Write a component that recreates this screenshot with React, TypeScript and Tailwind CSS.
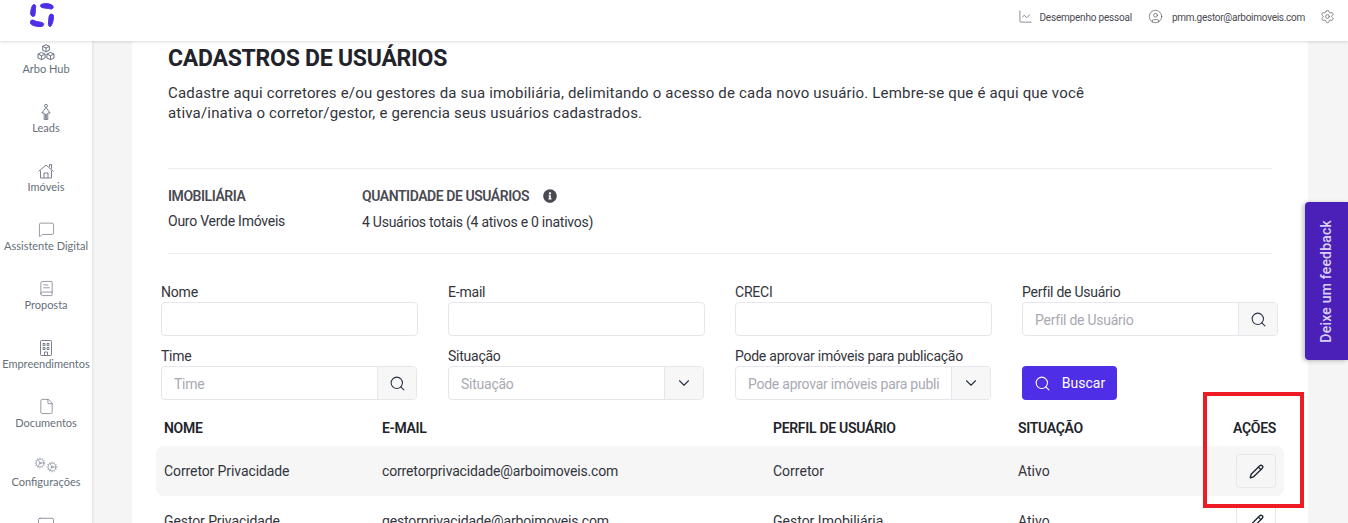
import { ChartLine, ChevronDown, CircleUser, File, MessageSquare, Search, Settings, BookText, Monitor, Pencil, Cog } from "lucide-react";
import { FaInfoCircle } from "react-icons/fa";
import type { ReactNode } from "react";

const iconProps = {
  viewBox: "0 0 18 18",
  fill: "none",
  stroke: "currentColor",
  strokeWidth: 0.9,
  className: "h-[18px] w-[18px]",
};

function CubesIcon() {
  return (
    <svg {...iconProps} className="h-[20px] w-[20px]">
      <path d="M9 1.5 12 3v3.5L9 8 6 6.500V3Z" />
      <path d="M6 3l3 1.500L12 3M9 4.500V8" />
      <path d="M5 8.500 8.200 10v3.500L5 15 1.800 13.500V10Z" />
      <path d="M1.800 10 5 11.500 8.200 10M5 11.500V15" />
      <path d="M13 8.500 16.200 10v3.500L13 15 9.800 13.500V10Z" />
      <path d="M9.800 10 13 11.500 16.200 10M13 11.500V15" />
    </svg>
  );
}

function PersonIcon() {
  return (
    <svg {...iconProps}>
      <circle cx="9" cy="2.800" r="1.500" />
      <path d="M9 4.500 4.800 10h2.400v6.500h1.500V11h.6v5.500h1.500V10h2.400Z" />
    </svg>
  );
}

function HouseIcon() {
  return (
    <svg {...iconProps}>
      <path d="M1.500 9.500 9 3l7.500 6.500" />
      <path d="M3.500 8.500V16h11V8.500" />
      <path d="M7 16v-5h4v5" />
      <path d="M12.500 5V2.500h2v4.200" />
    </svg>
  );
}

function TowerIcon() {
  return (
    <svg {...iconProps}>
      <rect x="3.500" y="1.500" width="11" height="15" rx="0.800" />
      <path d="M6 4.500h2v2H6zM10 4.500h2v2h-2zM6 8.500h2v2H6zM10 8.500h2v2h-2z" />
      <path d="M7.500 16.500V13h3v3.500" />
    </svg>
  );
}

const navItems: { label: string; icon: ReactNode }[] = [
  { label: "Arbo Hub", icon: <CubesIcon /> },
  { label: "Leads", icon: <PersonIcon /> },
  { label: "Imóveis", icon: <HouseIcon /> },
  { label: "Assistente Digital", icon: <MessageSquare className="h-[17px] w-[17px]" strokeWidth={1} /> },
  { label: "Proposta", icon: <BookText className="h-[17px] w-[17px]" strokeWidth={1} /> },
  { label: "Empreendimentos", icon: <TowerIcon /> },
  { label: "Documentos", icon: <File className="h-[17px] w-[17px]" strokeWidth={1} /> },
  {
    label: "Configurações",
    icon: (
      <span className="flex">
        <Cog className="-mt-[1px] h-3 w-3" strokeWidth={1} />
        <Cog className="mt-[3px] h-3 w-3" strokeWidth={1} />
      </span>
    ),
  },
  { label: "", icon: <Monitor className="h-[18px] w-[18px]" strokeWidth={1} /> },
];

const rows = [
  { name: "Corretor Privacidade", email: "corretorprivacidade@arboimoveis.com", profile: "Corretor", status: "Ativo" },
  { name: "Gestor Privacidade", email: "gestorprivacidade@arboimoveis.com", profile: "Gestor Imobiliária", status: "Ativo" },
];

function Logo() {
  return (
    <svg viewBox="0 0 24 24" className="h-6 w-6" fill="#4f2ee8" stroke="#4f2ee8" strokeWidth={1}>
      <path d="M3.500 1.500C5.500 1 6 3 5.500 5.500 5.200 8 5.500 11 4.500 13 3 14 .8 13 .7 11 .5 8 1.500 3 3.500 1.500Z" />
      <path d="M11 1.500C14 .2 20 .2 22.500 2.500 24 4 23 6.200 21 6 18 5.200 14 5.200 12 4.500 10.500 4 10 2.200 11 1.500Z" />
      <path d="M20 11.500C22 10.500 23.800 11.500 23.500 13.500 23.500 17 22.500 21.500 20.500 23.500 18.800 24 18.200 22 18.500 20 18.800 17 18.500 13.500 20 11.500Z" />
      <path d="M1 17.500C3 16.300 4.500 18 6.500 18.500 9 19 12.500 19 13.500 20.500 14.200 22 13 23.500 11 23.500 7 23.700 2.500 23 .5 20.500 0 19.300 .2 18.200 1 17.500Z" />
    </svg>
  );
}

function Field({ label }: { label: string }) {
  return (
    <div>
      <label className="mb-[1px] block h-[18px] text-[14px] leading-[18px] tracking-[-0.2px] text-[#33343c]">{label}</label>
      <input className="h-[34px] w-full rounded border border-[#e6e6ec] bg-white" />
    </div>
  );
}

function AddonField({ label, placeholder, chevron }: { label: string; placeholder: string; chevron?: boolean }) {
  return (
    <div>
      <label className="mb-[1px] block h-[18px] text-[14px] leading-[18px] tracking-[-0.25px] text-[#33343c]">{label}</label>
      <div className="flex h-[34px] w-[256px] overflow-hidden rounded border border-[#e6e6ec] bg-white">
        <div className="flex-1 truncate pl-3 text-[14px] leading-[34px] tracking-[-0.25px] text-[#a9a9b2]">{placeholder}</div>
        <div className="flex w-[39px] shrink-0 items-center justify-center border-l border-[#e6e6ec] bg-[#f7f7f8] text-[#2a3342]">
          {chevron ? <ChevronDown className="h-[18px] w-[18px]" strokeWidth={1.5} /> : <Search className="h-[17px] w-[17px]" strokeWidth={1.5} />}
        </div>
      </div>
    </div>
  );
}

export default function App() {
  return (
    <div className="relative h-[523px] w-[1348px] overflow-hidden bg-white font-['Roboto',sans-serif] text-[#33343c]">
      <header className="relative z-10 flex h-[41px] items-start justify-between bg-white pl-[30px] pr-[13px] pt-[3px] shadow-[0_1px_3px_rgba(0,0,0,0.14)]">
        <Logo />
        <div className="flex items-center pt-[4px] text-[10px] text-[#4a4a52]">
          <ChartLine className="mr-[6px] h-[15px] w-[15px]" strokeWidth={1} />
          <span className="mr-[16px] pt-[3px] tracking-[-0.2px]">Desempenho pessoal</span>
          <CircleUser className="mr-[9px] h-[15px] w-[15px]" strokeWidth={1} />
          <span className="mr-[15px] pt-[2px] tracking-[-0.27px]">pmm.gestor@arboimoveis.com</span>
          <Settings className="h-[15px] w-[15px]" strokeWidth={1} />
        </div>
      </header>

      <div className="flex h-[482px]">
        <nav className="z-[5] w-[92px] shrink-0 bg-white pt-[2px] font-['Lato',sans-serif] text-[11px] text-[#66707a]">
          {navItems.map((item, i) => (
            <div key={i} className="flex h-[59px] flex-col items-center whitespace-nowrap">
              <div className="flex h-[19px] items-center justify-center text-[#6b7280]">{item.icon}</div>
              <span className="leading-[14px]">{item.label}</span>
            </div>
          ))}
        </nav>

        <main className="flex-1 bg-[#f5f5f5] pl-[40px] pr-[40px] shadow-[inset_3px_0_3px_-2px_rgba(0,0,0,0.08)]">
          <div className="h-full overflow-hidden bg-white pl-[24px] pr-[24px]">
            <div className="ml-[12px]">
              <h1 className="mt-[4px] text-[23px] font-bold leading-[28px] tracking-[-0.25px] text-[#22232a]">CADASTROS DE USUÁRIOS</h1>
              <p className="mt-[10px] w-[940px] text-[15px] leading-[20px] tracking-[0.18px] text-[#33343c]">
                Cadastre aqui corretores e/ou gestores da sua imobiliária, delimitando o acesso de cada novo usuário. Lembre-se que é aqui que você ativa/inativa o corretor/gestor, e gerencia seus usuários cadastrados.
              </p>

              <div className="mt-[45px] flex h-[86px] w-[1104px] border-y border-[#ececf0] pt-[18px] text-[14px] leading-[18px]">
                <div className="w-[194px]">
                  <div className="font-semibold tracking-[-0.45px] text-[#4a4a52]">IMOBILIÁRIA</div>
                  <div className="mt-[7px] tracking-[-0.25px]">Ouro Verde Imóveis</div>
                </div>
                <div>
                  <div className="flex items-center font-semibold tracking-[-0.45px] text-[#4a4a52]">
                    QUANTIDADE DE USUÁRIOS
                    <FaInfoCircle className="ml-[14px] h-[14px] w-[14px]" />
                  </div>
                  <div className="mt-[8px] tracking-[-0.25px]">4 Usuários totais (4 ativos e 0 inativos)</div>
                </div>
              </div>
            </div>

            <div className="mt-[29px] ml-[5px] grid w-[1118px] grid-cols-[257px_257px_257px_256px] gap-x-[30px] gap-y-[11px]">
              <Field label="Nome" />
              <Field label="E-mail" />
              <Field label="CRECI" />
              <AddonField label="Perfil de Usuário" placeholder="Perfil de Usuário" />
              <AddonField label="Time" placeholder="Time" />
              <AddonField label="Situação" placeholder="Situação" chevron />
              <AddonField label="Pode aprovar imóveis para publicação" placeholder="Pode aprovar imóveis para publi" chevron />
              <div className="pt-[19px]">
                <button className="flex h-[34px] w-[95px] items-center justify-center gap-[11px] rounded bg-[#4f2ee8] text-[14px] text-white">
                  <Search className="h-[17px] w-[17px]" strokeWidth={1.5} />
                  Buscar
                </button>
              </div>
            </div>

            <table className="mt-[10px] w-[1128px] table-fixed text-left text-[14px]">
              <thead>
                <tr className="h-[36px] text-[#22232a]">
                  <th className="w-[226px] pl-[8px] font-semibold tracking-[-0.3px]">NOME</th>
                  <th className="w-[391px] font-semibold tracking-[-0.3px]">E-MAIL</th>
                  <th className="w-[245px] font-semibold tracking-[-0.3px]">PERFIL DE USUÁRIO</th>
                  <th className="w-[186px] font-semibold tracking-[-0.3px]">SITUAÇÃO</th>
                  <th className="pl-[29px] font-semibold tracking-[-0.3px]">AÇÕES</th>
                </tr>
              </thead>
              <tbody>
                {rows.map((row, i) => (
                  <tr key={row.name} className={i === 0 ? "h-[50px] bg-[#f6f6f6]" : "h-[50px]"}>
                    <td className="rounded-l-lg pl-[8px] tracking-[-0.1px]">{row.name}</td>
                    <td className="tracking-[-0.15px]">{row.email}</td>
                    <td>{row.profile}</td>
                    <td>{row.status}</td>
                    <td className="rounded-r-lg">
                      <button className="ml-[32px] flex h-[34px] w-[40px] items-center justify-center rounded border border-[#e8e8ea] bg-transparent">
                        <Pencil className="h-[15px] w-[15px] text-[#1f2937]" strokeWidth={2.2} />
                      </button>
                    </td>
                  </tr>
                ))}
              </tbody>
            </table>
          </div>
        </main>
      </div>

      <div className="absolute left-[1305px] top-[202px] z-20 flex h-[158px] w-[43px] items-center justify-center rounded-l bg-[#4a20b8] text-[14px] font-medium text-[#d9d0f4] shadow-[-2px_1px_4px_rgba(0,0,0,0.25)]">
        <span className="rotate-180 tracking-[0.2px] [writing-mode:vertical-rl]">Deixe um feedback</span>
      </div>

      <div className="pointer-events-none absolute left-[1203px] top-[392px] z-20 h-[116px] w-[101px] border-[4px] border-[#ed1c24]" />
    </div>
  );
}
